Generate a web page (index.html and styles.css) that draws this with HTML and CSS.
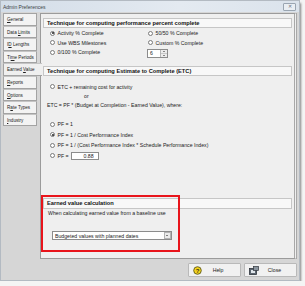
FILE: index.html
```html
<!DOCTYPE html>
<html lang="en">
  <head>
    <meta charset="UTF-8" />
    <title>Admin Preferences</title>
    <link rel="stylesheet" href="styles.css">
  </head>
  <body>
    <div class="window">
      <div class="titlebar">
        <span class="title">Admin Preferences</span>
        <span class="close-x">✕</span>
      </div>

      <div class="main">
        <ul class="tabs">
          <li><u>G</u>eneral</li>
          <li>Data <u>L</u>imits</li>
          <li>I<u>D</u> Lengths</li>
          <li>Ti<u>m</u>e Periods</li>
          <li class="selected">Earned <u>V</u>alue</li>
          <li><u>R</u>eports</li>
          <li><u>O</u>ptions</li>
          <li>R<u>a</u>te Types</li>
          <li><u>I</u>ndustry</li>
        </ul>

        <div class="panel">
          <div class="group-head">Technique for computing performance percent complete</div>
          <div class="pct-grid">
            <div class="opt"><span class="radio checked"></span>Activity % Complete</div>
            <div class="opt"><span class="radio"></span>50/50 % Complete</div>
            <div class="opt"><span class="radio"></span>Use WBS Milestones</div>
            <div class="opt"><span class="radio"></span>Custom % Complete</div>
            <div class="opt"><span class="radio"></span>0/100 % Complete</div>
            <div class="spinner">
              <span class="spin-val">6</span>
              <span class="spin-btns"><i class="up"></i><i class="down"></i></span>
            </div>
          </div>

          <div class="group-head head-etc">Technique for computing Estimate to Complete (ETC)</div>
          <div class="etc">
            <div class="opt row"><span class="radio"></span>ETC + remaining cost for activity</div>
            <div class="row or">or</div>
            <div class="row formula">ETC = PF * (Budget at Completion - Earned Value), where:</div>
            <div class="opt pf pf-first"><span class="radio"></span>PF = 1</div>
            <div class="opt pf"><span class="radio checked"></span>PF = 1 / Cost Performance Index</div>
            <div class="opt pf"><span class="radio"></span>PF = 1 / (Cost Performance Index * Schedule Performance Index)</div>
            <div class="opt pf"><span class="radio"></span>PF =<span class="num-input">0.88</span></div>
          </div>

          <div class="group-head head-ev">Earned value calculation</div>
          <div class="ev-note">When calculating earned value from a baseline use</div>
          <div class="select">
            <span>Budgeted values with planned dates</span>
            <span class="select-btn"><i></i></span>
          </div>

          <div class="highlight"></div>
        </div>
      </div>

      <div class="footer">
        <button class="btn">
          <svg class="ico" viewBox="0 0 9 9" width="9" height="9">
            <circle cx="4.5" cy="4.5" r="3.8" fill="#f3d21c" stroke="#5e5a1c" stroke-width="0.9" />
            <text x="4.5" y="6.6" font-size="6" font-weight="bold" text-anchor="middle" fill="#3a3410" font-family="Liberation Sans">?</text>
          </svg>
          <span class="btn-text">Help</span>
        </button>
        <button class="btn">
          <svg class="ico" viewBox="0 0 10 9" width="10" height="9">
            <rect x="0.5" y="2.5" width="7" height="6" fill="#5d6670" stroke="#2f353c" stroke-width="0.8" />
            <rect x="2" y="4" width="4" height="3" fill="#dfe5ea" />
            <rect x="4.5" y="0.5" width="5" height="4" fill="#8a949e" stroke="#2f353c" stroke-width="0.7" />
          </svg>
          <span class="btn-text">Close</span>
        </button>
      </div>
    </div>
  </body>
</html>
```

FILE: styles.css
```css
* {
  box-sizing: border-box;
}
body {
  margin: 0;
  background-color: #f4f4f4;
  font-family: "Liberation Sans", Arial, sans-serif;
  font-size: 5.2px;
  color: #222;
}
.window {
  width: 300px;
  height: 281px;
  background-color: #d6d6d6;
  border: 1px solid #b3bac2;
  box-shadow: 1px 3px 2px rgba(0, 0, 0, 0.45);
  display: flex;
  flex-direction: column;
}
.titlebar {
  height: 11px;
  display: flex;
  align-items: center;
  justify-content: space-between;
  padding: 0 3px 0 2px;
  background: linear-gradient(90deg, #d3dde8, #e4eaf1 60%, #dbe3ec);
  color: #3b3f44;
  font-size: 5px;
}
.close-x {
  width: 13px;
  height: 8px;
  border: 1px solid #9aa5b1;
  border-radius: 1px;
  background-color: #e9eef3;
  color: #69727c;
  font-size: 4.5px;
  display: flex;
  align-items: center;
  justify-content: center;
}
.main {
  display: flex;
  padding: 1px 2px 0 2px;
}
.tabs {
  list-style: none;
  margin: 0;
  padding: 0;
  width: 37px;
  font-size: 4.6px;
}
.tabs li {
  width: 34px;
  height: 12.6px;
  line-height: 11px;
  padding-left: 3px;
  border: 1px solid #a3a3a3;
  background-color: #f3f3f3;
  white-space: nowrap;
  overflow: hidden;
}
.tabs li + li {
  border-top-color: #c4c4c4;
}
.tabs li.selected {
  width: 39px;
  background-color: #efefef;
  border-right: none;
  position: relative;
  z-index: 1;
}
.tabs u {
  text-decoration-thickness: 0.5px;
}
.panel {
  position: relative;
  width: 257px;
  height: 246px;
  background-color: #efefef;
  border: 1px solid #9b9b9b;
  border-right: 3px double #a8a8a8;
  padding: 4px 2px 0 2px;
}
.group-head {
  height: 10px;
  line-height: 8px;
  padding-left: 3px;
  border: 1px solid #c6c6c6;
  background-color: #f8f8f8;
  font-weight: bold;
  font-size: 5.7px;
  color: #111;
  white-space: nowrap;
}
.opt {
  display: flex;
  align-items: center;
  white-space: nowrap;
}
.radio {
  width: 5px;
  height: 5px;
  border: 0.7px solid #7a7a7a;
  border-radius: 50%;
  background-color: #fff;
  margin-right: 2.5px;
  display: flex;
  align-items: center;
  justify-content: center;
  flex-shrink: 0;
}
.radio.checked::after {
  content: "";
  width: 2px;
  height: 2px;
  border-radius: 50%;
  background-color: #222;
}
.pct-grid {
  display: grid;
  grid-template-columns: 98px auto;
  grid-auto-rows: 9.5px;
  margin: 0.5px 0 0 7px;
}
.spinner {
  display: flex;
  width: 21px;
  height: 9px;
  margin: 1.5px 0 0 -1px;
  border: 1px solid #8c8c8c;
  background-color: #fff;
}
.spin-val {
  flex: 1;
  line-height: 7px;
  padding-left: 2px;
}
.spin-btns {
  width: 7px;
  display: flex;
  flex-direction: column;
  border-left: 1px solid #b5b5b5;
  background-color: #ececec;
}
.spin-btns i {
  flex: 1;
  display: flex;
  align-items: center;
  justify-content: center;
}
.spin-btns i::after {
  content: "";
  border-left: 1.5px solid transparent;
  border-right: 1.5px solid transparent;
}
.spin-btns .up::after {
  border-bottom: 1.5px solid #222;
}
.spin-btns .down::after {
  border-top: 1.5px solid #222;
}
.spin-btns .down {
  border-top: 1px solid #c9c9c9;
}
.head-etc {
  margin-top: 9px;
}
.etc {
  margin-top: 6px;
  padding-left: 7px;
}
.etc .row {
  height: 9.5px;
}
.etc .or {
  line-height: 9.5px;
  padding-left: 34px;
}
.etc .formula {
  line-height: 9.5px;
  margin-left: -3px;
}
.etc .pf {
  height: 10.5px;
}
.etc .pf-first {
  margin-top: 8.5px;
}
.num-input {
  width: 28px;
  height: 8px;
  margin-left: 2px;
  border: 1px solid #8c8c8c;
  background-color: #fff;
  line-height: 6px;
  text-align: right;
  padding-right: 4px;
}
.head-ev {
  height: 11px;
  line-height: 9px;
  margin-top: 37px;
}
.ev-note {
  height: 8px;
  line-height: 8px;
  padding-left: 5px;
}
.select {
  display: flex;
  align-items: center;
  justify-content: space-between;
  width: 120px;
  height: 9px;
  margin: 14px 0 0 9px;
  padding-left: 2px;
  border: 1px solid #8c8c8c;
  background-color: #fff;
}
.select-btn {
  width: 7px;
  height: 7px;
  margin-right: 0.5px;
  border: 1px solid #b3b3b3;
  background-color: #ececec;
  display: flex;
  align-items: center;
  justify-content: center;
}
.select-btn i {
  border-left: 1.5px solid transparent;
  border-right: 1.5px solid transparent;
  border-top: 1.5px solid #111;
}
.highlight {
  position: absolute;
  left: 0;
  top: 181px;
  width: 139px;
  height: 57px;
  border: 2px solid #e8141b;
}
.footer {
  display: flex;
  justify-content: flex-end;
  gap: 3px;
  padding: 4px 2px 0 0;
}
.btn {
  width: 53px;
  height: 14px;
  display: flex;
  align-items: center;
  padding: 0 0 0 4px;
  border: 1px solid #b9b9b9;
  border-radius: 1px;
  background-color: #f1f1f1;
  font-family: inherit;
  font-size: 5.2px;
  color: #222;
}
.btn-text {
  flex: 1;
  text-align: center;
  padding-right: 6px;
}
```
